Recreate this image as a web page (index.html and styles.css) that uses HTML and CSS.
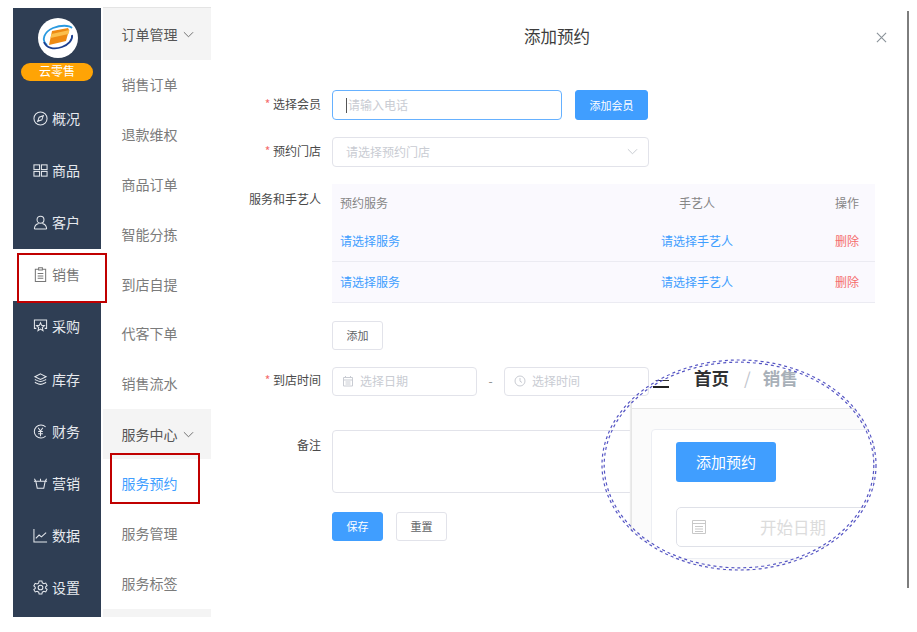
FILE: index.html
```html
<!DOCTYPE html>
<html lang="zh-CN">
<head>
  <meta charset="UTF-8" />
  <meta name="viewport" content="width=device-width, initial-scale=1.0"/>
  <title>添加预约</title>
  <link rel="stylesheet" href="styles.css">
</head>
<body>
  <div class="app">
    <nav class="sidebar">
      <div class="brand">
        <svg class="brand-logo" viewBox="0 0 40 40">
          <circle cx="20" cy="20" r="20" fill="#fff"/>
          <path d="M9 27C3 22 6 14 15 10c8-3 16-3 19 0" fill="none" stroke="#2a9ae0" stroke-width="1.800"/>
          <path d="M6 24c2 6 10 8 18 5 6-2 11-7 10-12" fill="none" stroke="#1d3f8f" stroke-width="1.800"/>
          <path d="M14 13l16-3 1 2-3 11-17 4z" fill="#ee8a12"/>
          <path d="M13.500 16l18-4-1 4-18 4z" fill="#fbbf4c"/>
        </svg>
        <div class="brand-name">云零售</div>
      </div>
      <a class="nav-item">
        <svg class="icon" viewBox="0 0 16 16"><circle cx="8" cy="8" r="7"/><path d="M11 5l-1.600 4.400L5 11l1.600-4.400zM8 8h.01"/></svg><span>概况</span>
      </a>
      <a class="nav-item">
        <svg class="icon" viewBox="0 0 16 16"><rect x="1" y="2" width="6" height="5"/><rect x="9" y="2" width="6" height="5"/><rect x="1" y="9" width="6" height="5"/><rect x="9" y="9" width="6" height="5"/></svg><span>商品</span>
      </a>
      <a class="nav-item">
        <svg class="icon" viewBox="0 0 16 16"><circle cx="8" cy="5" r="3.700"/><path d="M1.500 15c0-3.600 2.500-5.500 4.500-6M14.500 15c0-3.600-2.500-5.500-4.500-6M1.500 15h13"/></svg><span>客户</span>
      </a>
      <a class="nav-item nav-item-active">
        <svg class="icon" viewBox="0 0 16 16"><path d="M6 2.500H2.500v13h11v-13H10M6 .8h4v2.400H6zM5 7h6M5 9.500h6M5 12h6"/></svg><span>销售</span>
      </a>
      <a class="nav-item">
        <svg class="icon" viewBox="0 0 16 16"><path d="M3.500 10H1.500V1h13v9h-2M8 4l1.200 2.800 3 .3-2.300 2 .8 3.400L8 10.800l-2.700 1.700.8-3.400-2.300-2 3-.3z"/></svg><span>采购</span>
      </a>
      <a class="nav-item">
        <svg class="icon" viewBox="0 0 16 16"><path d="M8 2l6 3-6 3-6-3zM2 8c2 1 4 2.200 6 2.200S12 9 14 8M2 11c2 1 4 2.200 6 2.200S12 12 14 11"/></svg><span>库存</span>
      </a>
      <a class="nav-item">
        <svg class="icon" viewBox="0 0 16 16"><path d="M13.500 3.200A7 7 0 1 0 13.500 12.800M5.500 4L8 7.500 10.500 4M5.500 8h5M5.500 10.500h5M8 7.500V13"/></svg><span>财务</span>
      </a>
      <a class="nav-item">
        <svg class="icon" viewBox="0 0 16 16"><path d="M1 5.500h14M3 5.500L4.500 13h7L13 5.500M3 5.500L1.500 3M13 5.500L14.500 3M8 5.500L8 3"/></svg><span>营销</span>
      </a>
      <a class="nav-item">
        <svg class="icon" viewBox="0 0 16 16"><path d="M1 1v14h14M3 11l3.500-3.500 2.500 2 5-4.500"/></svg><span>数据</span>
      </a>
      <a class="nav-item">
        <svg class="icon" viewBox="0 0 16 16"><circle cx="8" cy="8" r="2.500"/><path d="M6.500 1h3l.4 2 1.700 1 2-.7 1.400 2.700-1.500 1.300v1.400l1.500 1.300-1.400 2.700-2-.7-1.700 1-.4 2h-3l-.4-2-1.700-1-2 .7L.9 10.300l1.500-1.300V7.600L.9 6.300 2.300 3.600l2 .7 1.700-1z"/></svg><span>设置</span>
      </a>
    </nav>

    <aside class="submenu">
      <div class="sub-group">订单管理<svg class="chevron" viewBox="0 0 12 7"><path d="M1 1l5 5 5-5"/></svg></div>
      <a class="sub-item">销售订单</a>
      <a class="sub-item">退款维权</a>
      <a class="sub-item">商品订单</a>
      <a class="sub-item">智能分拣</a>
      <a class="sub-item">到店自提</a>
      <a class="sub-item">代客下单</a>
      <a class="sub-item">销售流水</a>
      <div class="sub-group">服务中心<svg class="chevron" viewBox="0 0 12 7"><path d="M1 1l5 5 5-5"/></svg></div>
      <a class="sub-item sub-item-active">服务预约</a>
      <a class="sub-item">服务管理</a>
      <a class="sub-item">服务标签</a>
      <div class="sub-group sub-group-end"></div>
    </aside>

    <main class="dialog">
      <header class="dialog-head">
        <h2 class="dialog-title">添加预约</h2>
        <svg class="dialog-close" viewBox="0 0 12 12"><path d="M1 1l10 10M11 1L1 11"/></svg>
      </header>

      <form class="form">
        <div class="form-row">
          <label class="form-label"><span class="req">*</span> 选择会员</label>
          <div class="field field-member field-focus"><span class="caret"></span>请输入电话</div>
          <button type="button" class="btn btn-primary btn-member">添加会员</button>
        </div>
        <div class="form-row">
          <label class="form-label"><span class="req">*</span> 预约门店</label>
          <div class="field field-store">请选择预约门店
            <svg class="select-arrow" viewBox="0 0 12 7"><path d="M1 1l5 5 5-5"/></svg>
          </div>
        </div>
        <div class="form-row form-row-table">
          <label class="form-label form-label-top">服务和手艺人</label>
          <table class="service-table">
            <thead>
              <tr><th class="col-service">预约服务</th><th class="col-worker">手艺人</th><th class="col-action">操作</th></tr>
            </thead>
            <tbody>
              <tr><td class="link">请选择服务</td><td class="link col-worker">请选择手艺人</td><td class="danger col-action">删除</td></tr>
              <tr><td class="link">请选择服务</td><td class="link col-worker">请选择手艺人</td><td class="danger col-action">删除</td></tr>
            </tbody>
          </table>
        </div>
        <div class="form-row form-row-add">
          <button type="button" class="btn btn-plain">添加</button>
        </div>
        <div class="form-row form-row-time">
          <label class="form-label"><span class="req">*</span> 到店时间</label>
          <div class="field field-time">
            <svg class="field-icon" viewBox="0 0 12 12"><path d="M1.500 2.500h9v8.500h-9zM1.500 5h9M3.500 1v2M8.500 1v2M3.500 7h5M3.500 9h5"/></svg>选择日期
          </div>
          <span class="range-sep">-</span>
          <div class="field field-time">
            <svg class="field-icon" viewBox="0 0 12 12"><circle cx="6" cy="6" r="5"/><path d="M6 3v3.200l2 1.300"/></svg>选择时间
          </div>
        </div>
        <div class="form-row form-row-note">
          <label class="form-label form-label-note">备注</label>
          <div class="field field-note"></div>
        </div>
        <div class="form-row form-row-actions">
          <button type="button" class="btn btn-primary">保存</button>
          <button type="button" class="btn btn-plain">重置</button>
        </div>
      </form>
    </main>
    <div class="edge"></div>
  </div>

  <div class="mark mark-nav"></div>
  <div class="mark mark-sub"></div>

  <div class="lens">
    <div class="lens-clip">
      <div class="lens-head">
        <span class="lens-burger"></span>
        <b class="lens-crumb">首页</b>
        <span class="lens-slash">/</span>
        <b class="lens-crumb lens-crumb-muted">销售</b>
      </div>
      <div class="lens-body">
        <div class="lens-rule"></div>
        <div class="lens-card">
          <div class="lens-btn">添加预约</div>
          <div class="lens-input">
            <svg class="lens-input-icon" viewBox="0 0 16 16"><path d="M1.500 1.500h13v13h-13zM1.500 4.500h13M4 7.500h8M4 10h8M4 12.500h8"/></svg>开始日期
          </div>
        </div>
      </div>
    </div>
    <svg class="lens-ring" viewBox="0 0 276 212">
      <ellipse cx="138" cy="106" rx="137" ry="105"/>
      <ellipse cx="138" cy="106" rx="134.800" ry="102.800"/>
    </svg>
  </div>
</body>
</html>
```

FILE: styles.css
```css
* {
  box-sizing: border-box;
}
html, body {
  height: 632px;
  overflow: hidden;
}
body {
  margin: 0;
  background: #fff;
  font-family: "Noto Sans CJK SC", "Noto Sans", sans-serif;
  color: #606266;
}

.app {
  display: flex;
  align-items: flex-start;
  height: 609px;
  margin: 8px 0 0 13px;
}

/* main nav */
.sidebar {
  width: 88px;
  height: 609px;
  flex: none;
  background: #2f3e54;
}
.brand {
  height: 84px;
  padding-top: 10px;
  display: flex;
  flex-direction: column;
  align-items: center;
}
.brand-logo {
  width: 40px;
  height: 40px;
  margin-left: 1px;
}
.brand-name {
  width: 72px;
  height: 18px;
  margin: 5px 0 0 0;
  border-radius: 9px;
  background: #ffa405;
  color: #fff;
  font-size: 12px;
  line-height: 16px;
  text-align: center;
}
.nav-item {
  display: flex;
  align-items: center;
  gap: 4px;
  height: 52.2px;
  padding-left: 20px;
  color: #e6e9ee;
  font-size: 14px;
}
.nav-item span {
  margin-bottom: 1px;
}
.nav-item-active {
  background: #fff;
  color: #777;
}
.icon {
  width: 15px;
  height: 15px;
  flex: none;
  fill: none;
  stroke: currentColor;
  stroke-width: 1.1;
}

/* second level menu */
.submenu {
  width: 108px;
  height: 610px;
  flex: none;
  margin: -1px 0 0 2px;
  border-top: 1px solid #e4e4e4;
}
.sub-group {
  display: flex;
  align-items: center;
  gap: 5px;
  height: 50px;
  padding: 0 0 1px 18.500px;
  background: #f4f4f4;
  color: #555;
  font-size: 14px;
}
.sub-group:first-child {
  height: 52px;
}
.sub-group-end {
  height: 8px;
  padding: 0;
}
.chevron {
  width: 11px;
  height: 7px;
  margin-top: 2px;
  fill: none;
  stroke: #666;
  stroke-width: 1;
}
.sub-item {
  display: flex;
  align-items: center;
  height: 49.9px;
  padding: 0 0 2px 18.500px;
  color: #7b7b7b;
  font-size: 14px;
}
.sub-item-active {
  color: #409eff;
}

/* dialog */
.dialog {
  width: 696px;
  flex: none;
}
.dialog-head {
  position: relative;
  height: 82px;
  padding-top: 15px;
  padding-right: 4px;
  text-align: center;
}
.dialog-title {
  margin: 0;
  font-size: 16.5px;
  font-weight: 400;
  line-height: 26px;
  color: #3c3c3c;
}
.dialog-close {
  position: absolute;
  top: 24px;
  left: 665px;
  width: 11px;
  height: 11px;
  fill: none;
  stroke: #8a9299;
  stroke-width: 1.2;
}

.form-row {
  display: flex;
  align-items: center;
  margin-bottom: 17px;
}
.form-label {
  width: 110px;
  flex: none;
  margin-right: 11px;
  padding-bottom: 3px;
  text-align: right;
  font-size: 12px;
  color: #4a4a4a;
}
.form-label-top {
  align-self: flex-start;
  margin-top: 6px;
  padding-bottom: 0;
}
.form-label-note {
  align-self: flex-start;
  margin-top: 6px;
  padding-bottom: 0;
}
.req {
  color: #f56c6c;
}
.field {
  display: flex;
  align-items: center;
  height: 30px;
  padding: 0 0 2px 13px;
  border: 1px solid #e2e3ea;
  border-radius: 4px;
  background: #fff;
  font-size: 12px;
  color: #c9ccd3;
}
.field-member {
  width: 230px;
}
.field-focus {
  border-color: #66b1ff;
}
.caret {
  width: 1px;
  height: 15px;
  margin-top: 2px;
  margin-right: 1px;
  background: #555;
}
.field-store {
  position: relative;
  width: 317px;
}
.select-arrow {
  position: absolute;
  top: 10px;
  right: 10px;
  width: 11px;
  height: 7px;
  fill: none;
  stroke: #c3c6cd;
  stroke-width: 1;
}
.form-row-table {
  margin-bottom: 18px;
}
.service-table {
  width: 543px;
  table-layout: fixed;
  border-collapse: collapse;
  background: #faf9fe;
  font-size: 12px;
}
.service-table th {
  height: 36px;
  padding: 0 0 0 8px;
  font-weight: 400;
  text-align: left;
  color: #868686;
}
.service-table td {
  height: 41px;
  padding: 0 0 0 8px;
  border-bottom: 1px solid #ebebf2;
}
.col-service {
  width: 270px;
}
.service-table .col-worker {
  width: 190px;
  padding-left: 0;
  text-align: center;
}
.service-table .col-action {
  padding: 0 16px 0 0;
  text-align: right;
}
.link {
  color: #409eff;
}
.danger {
  color: #f56c6c;
}

.btn {
  width: 51px;
  height: 29px;
  padding: 0;
  border: 1px solid #e2e3ea;
  border-radius: 3px;
  background: #fff;
  font-family: inherit;
  font-size: 11px;
  color: #606266;
}
.btn-primary {
  border-color: #409eff;
  background: #409eff;
  color: #fff;
}
.btn-member {
  width: 73px;
  height: 30px;
  margin-left: 13px;
}
.form-row-add {
  padding-left: 121px;
}
.form-row-time {
  margin-bottom: 34px;
}
.field-time {
  width: 145px;
  height: 29px;
  padding-left: 9px;
}
.field-icon {
  width: 12px;
  height: 12px;
  margin: 2px 6px 0 0;
  fill: none;
  stroke: #c9ccd3;
  stroke-width: 1;
}
.range-sep {
  width: 27px;
  padding-bottom: 2px;
  text-align: center;
  font-size: 12px;
  color: #888;
}
.form-row-note {
  margin-bottom: 19px;
}
.field-note {
  width: 320px;
  height: 63px;
}
.form-row-actions {
  gap: 13px;
  padding-left: 121px;
}

/* red boxes drawn over the shot */
.mark {
  position: absolute;
  border: 2px solid #c00000;
}
.mark-nav {
  left: 17px;
  top: 253px;
  width: 90px;
  height: 50px;
}
.mark-sub {
  left: 110px;
  top: 453px;
  width: 90px;
  height: 51px;
}

/* zoomed detail in the dashed ring */
.lens {
  position: absolute;
  left: 601px;
  top: 359px;
  width: 276px;
  height: 212px;
}
.lens-ring {
  position: absolute;
  inset: 0;
  width: 276px;
  height: 212px;
  fill: none;
  stroke: #5656c4;
  stroke-width: 1.2;
  stroke-dasharray: 3 3;
}
.lens-clip {
  width: 276px;
  height: 212px;
  border-radius: 50%;
  overflow: hidden;
  display: flex;
  flex-direction: column;
}
.lens-head {
  display: flex;
  align-items: center;
  height: 41px;
  flex: none;
  padding: 0 0 5px 52px;
}
.lens-burger {
  width: 16px;
  height: 8px;
  margin-top: 14px;
  margin-right: 25px;
  border-top: 1px solid #333;
  border-bottom: 2px solid #222;
}
.lens-crumb {
  font-size: 17.500px;
  color: #303133;
}
.lens-crumb-muted {
  color: #a8b0b8;
}
.lens-slash {
  margin: 0 12px 0 15px;
  font-size: 17px;
  color: #c0c4cc;
}
.lens-body {
  flex: 1;
  margin-left: 30px;
  border-left: 1px solid #e6e6e6;
  box-shadow: -1px 0 1px #ececec;
  background: #fbfbfb;
}
.lens-rule {
  height: 9px;
  border-bottom: 1px solid #e6e6e6;
  background: #fff;
}
.lens-card {
  width: 223px;
  height: 130px;
  margin: 20px 0 0 19px;
  padding: 12px 0 0 24px;
  border: 1px solid #eceef3;
  border-radius: 4px;
  background: #fff;
}
.lens-btn {
  width: 100px;
  height: 40px;
  border-radius: 3px;
  background: #409eff;
  color: #fff;
  font-size: 15px;
  line-height: 39px;
  text-align: center;
}
.lens-input {
  display: flex;
  align-items: center;
  width: 210px;
  height: 40px;
  margin-top: 25px;
  padding-left: 14px;
  border: 1px solid #dfe1e8;
  border-radius: 5px;
  font-size: 16.500px;
  color: #dcdcdc;
}
.lens-input-icon {
  width: 16px;
  height: 16px;
  margin-right: 53px;
  fill: none;
  stroke: #c8c8c8;
  stroke-width: 1;
}

/* thin rule at the right of the shot */
.edge {
  width: 2px;
  height: 577px;
  flex: none;
  margin-top: 3px;
  background: #7d7d7d;
}
```
